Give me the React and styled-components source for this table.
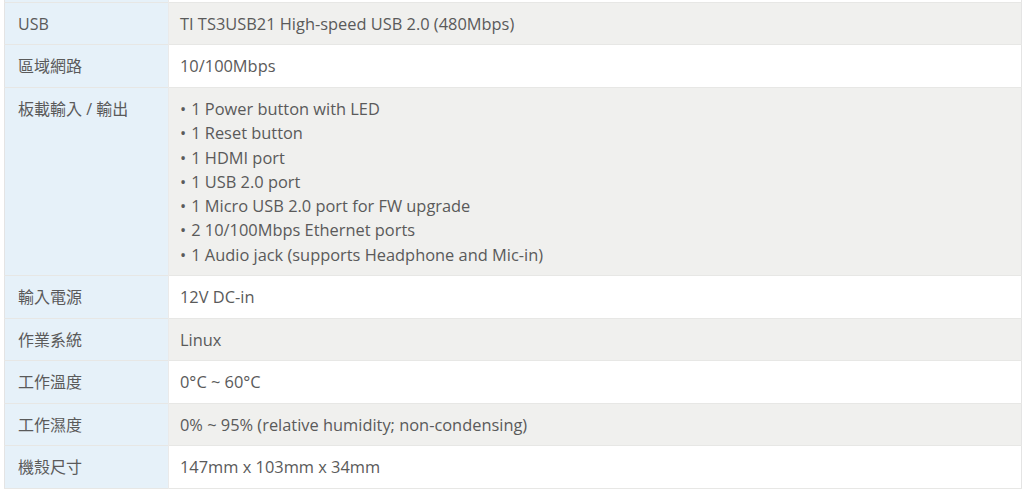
import React from "react";
import styled, { createGlobalStyle } from "styled-components";

const GlobalStyle = createGlobalStyle`
  html, body {
    margin: 0;
    padding: 0;
    background: #ffffff;
  }
  body {
    font-family: "Open Sans", "Noto Sans CJK TC", sans-serif;
    color: #5a5a5a;
  }
`;

const Wrapper = styled.div`
  padding: 0 2px 0 4px;
`;

const SpecTable = styled.table`
  width: 100%;
  table-layout: fixed;
  border-collapse: collapse;
  border: 1px solid #e4e4e4;
  border-top: none;
  font-size: 16.4px;
  line-height: 24.3px;
`;

const LabelCol = styled.col`
  width: 164px;
`;

const Row = styled.tr`
  background: ${({ $alt }) => ($alt ? "#f0f0ee" : "#ffffff")};
  border-bottom: 1px solid #e7e7e5;
`;

const Label = styled.th`
  text-align: left;
  vertical-align: top;
  font-weight: 400;
  font-size: 16px;
  background: #e6f1f9;
  padding: 9px 10px 8.2px 13px;
  border-right: 1px solid #eaeaea;
  white-space: nowrap;
`;

const Value = styled.td`
  vertical-align: top;
  padding: 9px 12px 8.2px 11px;
`;

const TopLabel = styled.th`
  height: 2px;
  padding: 0;
  background: #e6f1f9;
  border-right: 1px solid #eaeaea;
`;

const TopValue = styled.td`
  height: 2px;
  padding: 0;
`;

const BulletList = styled.ul`
  margin: 0;
  padding: 0;
  list-style: none;
`;

const Bullet = styled.li`
  &::before {
    content: "•";
    margin-right: 5px;
  }
`;

const specs = [
  { label: "USB", value: "TI TS3USB21 High-speed USB 2.0 (480Mbps)" },
  { label: "區域網路", value: "10/100Mbps" },
  {
    label: "板載輸入 / 輸出",
    list: [
      "1 Power button with LED",
      "1 Reset button",
      "1 HDMI port",
      "1 USB 2.0 port",
      "1 Micro USB 2.0 port for FW upgrade",
      "2 10/100Mbps Ethernet ports",
      "1 Audio jack (supports Headphone and Mic-in)",
    ],
  },
  { label: "輸入電源", value: "12V DC-in" },
  { label: "作業系統", value: "Linux" },
  { label: "工作溫度", value: "0°C ~ 60°C" },
  { label: "工作濕度", value: "0% ~ 95% (relative humidity; non-condensing)" },
  { label: "機殼尺寸", value: "147mm x 103mm x 34mm" },
];

export default function App() {
  return (
    <>
      <GlobalStyle />
      <Wrapper>
        <SpecTable>
          <colgroup>
            <LabelCol />
            <col />
          </colgroup>
          <tbody>
            <Row>
              <TopLabel />
              <TopValue />
            </Row>
            {specs.map((s, i) => (
              <Row key={s.label} $alt={i % 2 === 0}>
                <Label>{s.label}</Label>
                <Value>
                  {s.list ? (
                    <BulletList>
                      {s.list.map((item) => (
                        <Bullet key={item}>{item}</Bullet>
                      ))}
                    </BulletList>
                  ) : (
                    s.value
                  )}
                </Value>
              </Row>
            ))}
          </tbody>
        </SpecTable>
      </Wrapper>
    </>
  );
}
